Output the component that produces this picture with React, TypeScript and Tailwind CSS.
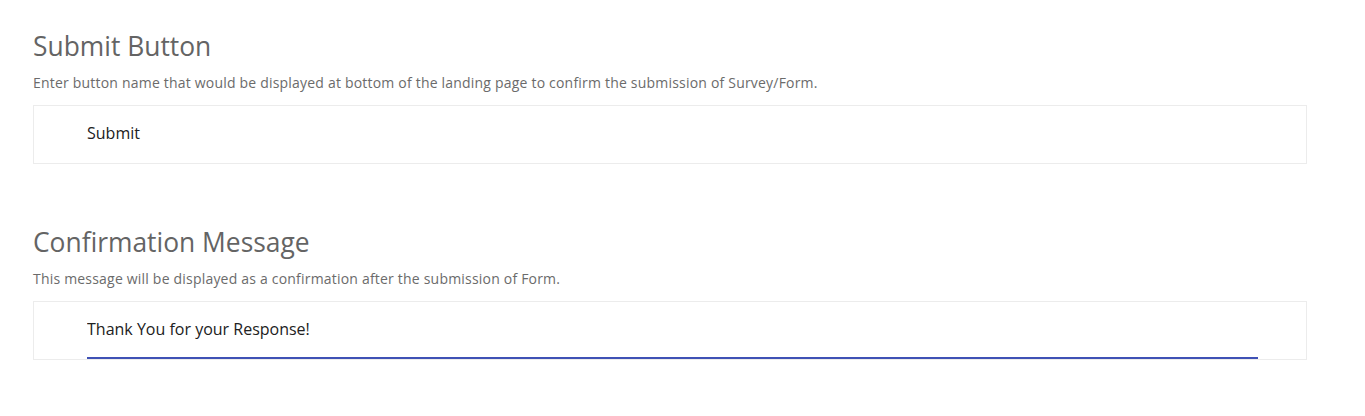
import React from "react";

const font = { fontFamily: '"Open Sans", "Noto Sans", sans-serif' };

type FieldProps = {
  title: string;
  hint: string;
  value: string;
  focused?: boolean;
};

const FieldSection = ({ title, hint, value, focused }: FieldProps) => {
  return (
    <section>
      {/* Title + helper text */}
      <h2 className="text-[26.4px] leading-[36px] font-normal text-[#646464]">{title}</h2>
      <p className="mt-[9px] text-[14px] leading-[20px] tracking-[0.2px] text-[#6b6b6b]">{hint}</p>

      {/* Input card */}
      <div className="mt-[12px] border border-[#ececec] bg-white pl-[53px] pr-[48px]">
        <input
          type="text"
          defaultValue={value}
          className={
            "block w-full bg-transparent pt-[15px] pb-[16px] text-[16px] leading-[24px] text-[#212121] outline-none border-b-2 " +
            (focused ? "border-[#3f51b5]" : "border-transparent")
          }
          style={font}
        />
      </div>
    </section>
  );
};

const App = () => {
  return (
    <div className="min-h-[416px] bg-white pt-[28px] pl-[33px] pr-[58px]" style={font}>
      <FieldSection
        title="Submit Button"
        hint="Enter button name that would be displayed at bottom of the landing page to confirm the submission of Survey/Form."
        value="Submit"
      />

      <div className="mt-[60px]">
        <FieldSection
          title="Confirmation Message"
          hint="This message will be displayed as a confirmation after the submission of Form."
          value="Thank You for your Response!"
          focused
        />
      </div>
    </div>
  );
};

export default App;
